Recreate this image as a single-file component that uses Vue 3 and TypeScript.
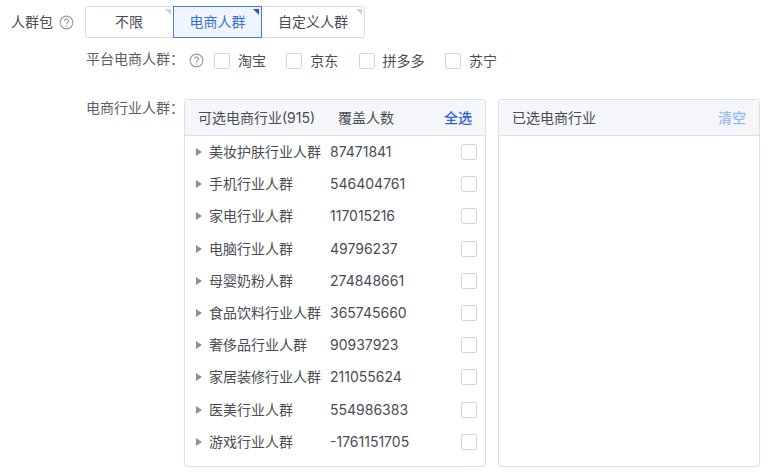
<script setup lang="ts">
const options = ['不限', '电商人群', '自定义人群']
const platforms = ['淘宝', '京东', '拼多多', '苏宁']
const industries: [string, string][] = [
  ['美妆护肤行业人群', '87471841'],
  ['手机行业人群', '546404761'],
  ['家电行业人群', '117015216'],
  ['电脑行业人群', '49796237'],
  ['母婴奶粉人群', '274848661'],
  ['食品饮料行业人群', '365745660'],
  ['奢侈品行业人群', '90937923'],
  ['家居装修行业人群', '211055624'],
  ['医美行业人群', '554986383'],
  ['游戏行业人群', '-1761151705'],
]
</script>

<template>
  <div class="page">
    <div class="top-row">
      <span class="top-label">人群包</span>
      <svg class="help top-help" viewBox="0 0 16 16">
        <circle cx="8" cy="8" r="6.8" />
        <path d="M5.9 6.3a2.1 2.1 0 1 1 3.3 1.7c-.8.5-1.2.9-1.2 1.8" />
        <circle class="dot" cx="8" cy="11.7" r=".8" />
      </svg>
      <div class="segments">
        <div
          v-for="(o, i) in options"
          :key="o"
          class="segment"
          :class="{ active: i === 1, wide: i === 2 }"
        >{{ o }}<i class="corner"></i></div>
      </div>
    </div>

    <div class="platform-row">
      <span class="field-label">平台电商人群：</span>
      <svg class="help" viewBox="0 0 16 16">
        <circle cx="8" cy="8" r="6.8" />
        <path d="M5.9 6.3a2.1 2.1 0 1 1 3.3 1.7c-.8.5-1.2.9-1.2 1.8" />
        <circle class="dot" cx="8" cy="11.7" r=".8" />
      </svg>
      <label v-for="p in platforms" :key="p" class="check-item">
        <span class="box"></span>{{ p }}
      </label>
    </div>

    <div class="industry-row">
      <span class="field-label industry-label">电商行业人群：</span>
      <section class="panel left">
        <header class="panel-head">
          <span class="col-name">可选电商行业(915)</span>
          <span class="col-count">覆盖人数</span>
          <a class="action">全选</a>
        </header>
        <ul class="list">
          <li v-for="[name, n] in industries" :key="name" class="item">
            <i class="caret"></i>
            <span class="name">{{ name }}</span>
            <span class="num">{{ n }}</span>
            <span class="box"></span>
          </li>
        </ul>
      </section>
      <section class="panel right">
        <header class="panel-head">
          <span class="col-name">已选电商行业</span>
          <a class="action muted">清空</a>
        </header>
      </section>
    </div>
  </div>
</template>

<style scoped>
.page {
  width: 779px;
  height: 476px;
  box-sizing: border-box;
  padding: 6px 19px 0 11px;
  overflow: hidden;
  background: #fff;
  color: #4a4d55;
  font: 14px/20px Inter, "Noto Sans CJK SC", sans-serif;
}
.top-row {
  display: flex;
  align-items: center;
  height: 32px;
}
.top-label { width: 48px; }
.help {
  flex: none;
  width: 15px;
  height: 15px;
  fill: none;
  stroke: #999ca6;
  stroke-width: 1.2;
}
.help .dot { fill: #999ca6; stroke: none; }
.top-help { margin-right: 11px; }
.segments { display: flex; }
.segment {
  position: relative;
  box-sizing: border-box;
  width: 89px;
  height: 32px;
  margin-left: -1px;
  border: 1px solid #d9dcea;
  background: #fff;
  line-height: 30px;
  text-align: center;
}
.segment:first-child { margin-left: 0; border-radius: 3px 0 0 3px; text-indent: -1px; }
.segment:last-child { border-radius: 0 3px 3px 0; }
.segment.wide { width: 104px; }
.segment.active {
  z-index: 1;
  border-color: #477bf0;
  background: #f0f6ff;
  color: #3a6de0;
}
.corner {
  position: absolute;
  top: 2px;
  right: 2px;
  border-top: 6px solid #cfd2dc;
  border-left: 6px solid transparent;
}
.active .corner { border-top-color: #2c56b8; }
.platform-row {
  display: flex;
  align-items: center;
  height: 24px;
  margin-top: 9px;
  padding-left: 75px;
}
.field-label { width: 102px; flex: none; color: #5c5f68; }
.platform-row .help { margin: 2px 10px 0 1px; }
.check-item {
  display: flex;
  align-items: center;
  margin-right: 20.3px;
  margin-top: 3px;
}
.box {
  flex: none;
  box-sizing: border-box;
  width: 16px;
  height: 16px;
  border: 1px solid #d2d5e0;
  border-radius: 2px;
  background: #fff;
}
.check-item .box { margin-right: 8px; }
.industry-row {
  display: flex;
  align-items: flex-start;
  margin-top: 28px;
  padding-left: 75px;
}
.industry-label { width: 98px; white-space: nowrap; margin-top: -1px; }
.panel {
  box-sizing: border-box;
  height: 368px;
  border: 1px solid #dcdfea;
  border-radius: 3px;
}
.left { width: 302px; }
.right { width: 262px; margin-left: 12px; }
.panel-head {
  display: flex;
  align-items: center;
  height: 36px;
  box-sizing: border-box;
  padding: 0 13px;
  border-bottom: 1px solid #dcdfea;
  background: #f5f6fa;
}
.col-name { flex: none; }
.left .col-name { width: 140px; }
.col-count { flex: 1; }
.right .col-name { flex: 1; }
.action { color: #2f62d9; font-weight: 500; }
.action.muted { color: #8fbbfa; }
.list { margin: 0; padding: 0; list-style: none; }
.item {
  display: flex;
  align-items: center;
  height: 32.2px;
  padding: 0 8px 0 11px;
}
.caret {
  flex: none;
  margin-right: 7px;
  border-top: 4.5px solid transparent;
  border-bottom: 4.5px solid transparent;
  border-left: 6px solid #8e9199;
}
.name { width: 121px; flex: none; white-space: nowrap; }
.num { flex: 1; }
</style>
